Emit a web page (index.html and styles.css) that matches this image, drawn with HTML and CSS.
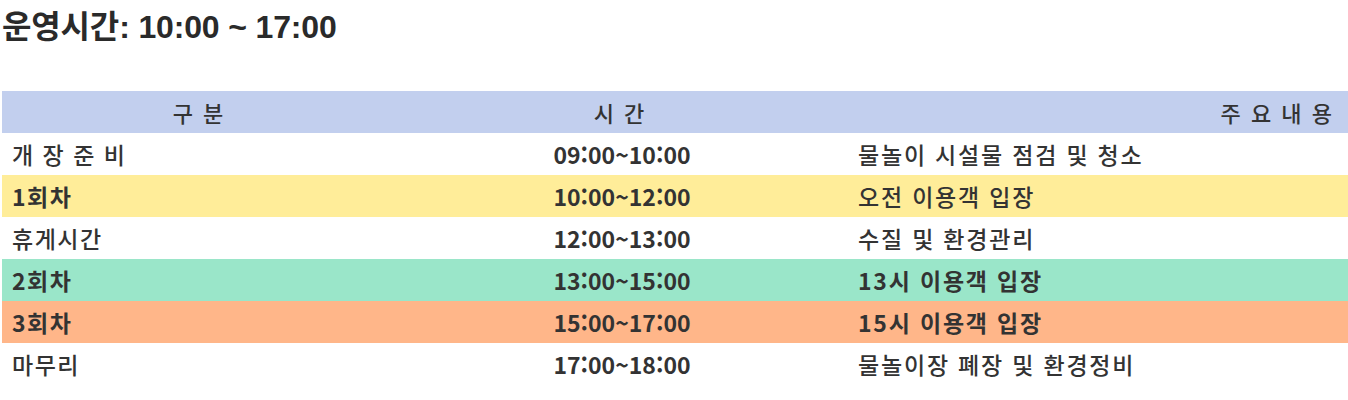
FILE: index.html
```html
<!DOCTYPE html>
<html lang="ko">
<head>
<meta charset="utf-8">
<link rel="stylesheet" href="styles.css">
</head>
<body>
<h2 class="title">운영시간: 10:00 ~ 17:00</h2>
<table class="schedule">
  <colgroup>
    <col class="c1"><col class="c2"><col class="c3">
  </colgroup>
  <thead>
    <tr>
      <th class="h-center">구 분</th>
      <th class="h-center">시 간</th>
      <th class="h-right">주 요 내 용</th>
    </tr>
  </thead>
  <tbody>
    <tr>
      <td class="name">개 장 준 비</td>
      <td class="time">09:00~10:00</td>
      <td class="desc">물놀이 시설물 점검 및 청소</td>
    </tr>
    <tr class="yellow strong">
      <td class="name">1회차</td>
      <td class="time">10:00~12:00</td>
      <td class="desc light">오전 이용객 입장</td>
    </tr>
    <tr>
      <td class="name">휴게시간</td>
      <td class="time">12:00~13:00</td>
      <td class="desc">수질 및 환경관리</td>
    </tr>
    <tr class="green strong">
      <td class="name">2회차</td>
      <td class="time">13:00~15:00</td>
      <td class="desc">13시 이용객 입장</td>
    </tr>
    <tr class="orange strong">
      <td class="name">3회차</td>
      <td class="time">15:00~17:00</td>
      <td class="desc">15시 이용객 입장</td>
    </tr>
    <tr>
      <td class="name">마무리</td>
      <td class="time">17:00~18:00</td>
      <td class="desc">물놀이장 폐장 및 환경정비</td>
    </tr>
  </tbody>
</table>
</body>
</html>
```
FILE: styles.css
```css
html, body {
  margin: 0;
  padding: 0;
  background: #fff;
}
body {
  padding: 0 0 0 2px;
  color: #333;
  font-family: "Noto Sans CJK KR", "Noto Sans", sans-serif;
}
.title {
  margin: 0;
  padding-top: 8px;
  height: 91px;
  box-sizing: border-box;
  font-family: "Liberation Sans", "Noto Sans CJK KR", sans-serif;
  font-size: 32px;
  font-weight: 700;
  line-height: 38px;
  color: #2a2a2a;
  letter-spacing: -0.15px;
}
.schedule {
  border-collapse: collapse;
  width: 1346px;
  table-layout: fixed;
  font-size: 23px;
}
.c1 { width: 398px; }
.c2 { width: 444px; }
.c3 { width: 504px; }
.schedule th {
  background: #c2cfee;
  height: 42px;
  padding: 0 14px 0 10px;
  font-size: 22px;
  font-weight: 500;
  letter-spacing: 2px;
  box-sizing: border-box;
}
.h-center { text-align: center; }
.h-right { text-align: right; }
.schedule td {
  height: 42px;
  padding: 0 10px;
  box-sizing: border-box;
  font-weight: 500;
  white-space: nowrap;
  letter-spacing: 1.5px;
}
.schedule td.time {
  text-align: center;
  font-weight: 700;
  letter-spacing: 0;
}
.schedule td.desc {
  padding-left: 14px;
  letter-spacing: 1.8px;
}
.strong td { font-weight: 700; }
.strong td.light { font-weight: 500; }
.yellow { background: #ffed99; }
.green { background: #9ae6c9; }
.orange { background: #ffb689; }
```
